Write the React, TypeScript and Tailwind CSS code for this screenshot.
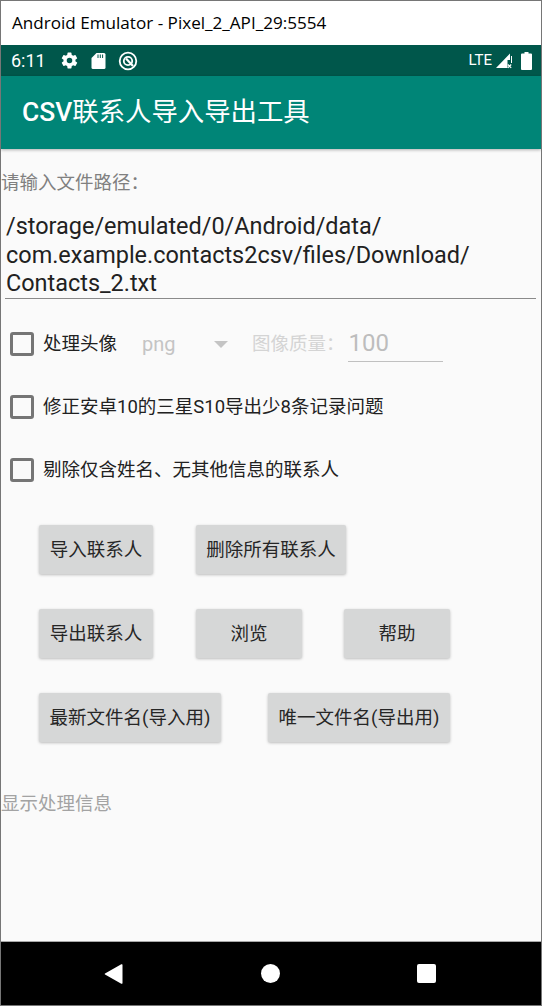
const cjk = "font-['Roboto','Noto_Sans_CJK_SC',sans-serif]";

function Box() {
  return <div className="w-[24px] h-[24px] rounded-[3px] border-[3px] border-[#757575] shrink-0" />;
}

function Btn({ w, label, ml }: { w: string; label: string; ml: string }) {
  return (
    <div className={`${w} ${ml} h-[49px] pt-[2px] flex items-center justify-center rounded-[2px] bg-[#d6d7d7] text-[18.5px] text-[#262626] shadow-[0_1px_3px_rgba(0,0,0,0.25)] whitespace-nowrap`}>
      {label}
    </div>
  );
}

export default function App() {
  return (
    <div className={`${cjk} w-[542px] h-[1006px] bg-white border border-[#767676] flex flex-col overflow-hidden`}>
      <div className="h-[44px] bg-white flex items-center pl-[11px] text-[17.1px] text-black font-['Open_Sans',sans-serif] shrink-0">
        Android Emulator - Pixel_2_API_29:5554
      </div>
      <div className="h-[31px] bg-[#00574b] flex items-center pl-[10px] pr-[9px] text-white shrink-0">
        <span className="text-[18px] w-[37px]">6:11</span>
        <svg className="ml-[12px]" width="19" height="19" viewBox="0 0 24 24" fill="#fff">
          <path d="M19.400 13c.04-.3.1-.65.1-1s-.06-.7-.1-1l2.100-1.650c.2-.15.25-.42.13-.64l-2-3.460c-.12-.22-.4-.3-.6-.22l-2.500 1c-.5-.4-1.100-.7-1.700-1l-.4-2.650A.5.5 0 0 0 14 2h-4a.5.5 0 0 0-.5.42L9.100 5.070c-.6.25-1.200.6-1.700 1l-2.500-1c-.2-.1-.5 0-.6.22l-2 3.460c-.12.22-.08.5.13.64L4.500 11c0 .3-.1.65-.1 1s.06.7.1 1l-2.100 1.650c-.2.15-.25.42-.13.64l2 3.460c.12.22.4.3.6.22l2.500-1c.5.4 1.100.7 1.700 1l.4 2.650c0 .24.25.42.5.42h4c.25 0 .46-.18.5-.42l.4-2.650c.6-.25 1.200-.6 1.700-1l2.500 1c.2.1.5 0 .6-.22l2-3.460c.12-.22.07-.5-.13-.64L19.400 13zM12 15.500a3.500 3.500 0 1 1 0-7 3.500 3.500 0 0 1 0 7z" />
        </svg>
        <svg className="ml-[12px]" width="15" height="18" viewBox="0 0 15 18" fill="#fff">
          <path d="M5.500 1H13a1.500 1.500 0 0 1 1.500 1.500v13A1.500 1.500 0 0 1 13 17H2a1.500 1.500 0 0 1-1.500-1.500V6z" />
          <path d="M7 2.500v3.500M9.300 2.500v3.500M11.600 2.500v3.500" stroke="#00574b" strokeWidth="1" />
        </svg>
        <svg className="ml-[12px]" width="20" height="20" viewBox="0 0 20 20" fill="none" stroke="#fff">
          <circle cx="10" cy="10" r="8.300" strokeWidth="1.800" />
          <circle cx="10" cy="10" r="4.200" strokeWidth="1.800" />
          <path d="M8 7.500 15 15" strokeWidth="2.200" />
        </svg>
        <span className="ml-auto text-[15px]">LTE</span>
        <svg className="ml-[3px]" width="18" height="18" viewBox="0 0 18 18" fill="#fff">
          <path d="M15 1.500v6.500h-2.500v8H1z" />
          <path d="M16.500 4v7" stroke="#fff" strokeWidth="1" />
          <path d="M12.800 12.500l3.400 3.400M16.200 12.500 12.800 15.900" stroke="#fff" strokeWidth="1.200" />
        </svg>
        <svg className="ml-[8px]" width="11" height="18" viewBox="0 0 11 18" fill="#fff">
          <path d="M3.500 0h4v1.500H10a1 1 0 0 1 1 1V17a1 1 0 0 1-1 1H1a1 1 0 0 1-1-1V2.500a1 1 0 0 1 1-1h2.500z" />
        </svg>
      </div>
      <div className="h-[73px] bg-[#008577] flex items-center pl-[21px] text-[26.4px] text-white shrink-0 shadow-[0_1px_3px_rgba(0,0,0,0.3)] z-10">
        <span className="font-medium">CSV</span>联系人导入导出工具
      </div>
      <div className="flex-1 bg-[#fafafa] flex flex-col min-h-0">
        <div className="text-[18.5px] leading-[24px] text-[#808080] mt-[22px]">请输入文件路径：</div>
        <div className="mx-[4px] mt-[17px] pl-[1px] text-[23.45px] leading-[28.5px] text-[#212121] border-b border-[#8a8a8a] h-[87px] w-[531px]">
          /storage/emulated/0/Android/data/<br />
          com.example.contacts2csv/files/Download/<br />
          Contacts_2.txt
        </div>
        <div className="flex items-center ml-[9px] mt-[30px] h-[30px] text-[18.5px]">
          <Box />
          <span className="ml-[9px] mt-[2px] text-[#212121] w-[99px]">处理头像</span>
          <span className="text-[20px] text-[#c4c4c4] w-[72px]">png</span>
          <svg width="14" height="7" viewBox="0 0 14 7" fill="#c4c4c4"><path d="M0 0h14L7 7z" /></svg>
          <span className="ml-[24px] mt-[2px] text-[#d4d4d4]">图像质量：</span>
          <span className="ml-[3px] w-[95px] h-[34px] text-[24px] leading-[30px] mt-[2px] text-[#bdbdbd] border-b border-[#c0c0c0] pl-[1px]">100</span>
        </div>
        <div className="flex items-center ml-[9px] mt-[33px] h-[30px] text-[18.5px] text-[#212121]">
          <Box />
          <span className="ml-[9px] mt-[2px]">修正安卓10的三星S10导出少8条记录问题</span>
        </div>
        <div className="flex items-center ml-[9px] mt-[33px] h-[30px] text-[18.5px] text-[#212121]">
          <Box />
          <span className="ml-[9px] mt-[2px]">剔除仅含姓名、无其他信息的联系人</span>
        </div>
        <div className="flex ml-[38px] mt-[40px]">
          <Btn w="w-[114px]" ml="" label="导入联系人" />
          <Btn w="w-[150px]" ml="ml-[43px]" label="删除所有联系人" />
        </div>
        <div className="flex ml-[38px] mt-[35px]">
          <Btn w="w-[114px]" ml="" label="导出联系人" />
          <Btn w="w-[106px]" ml="ml-[43px]" label="浏览" />
          <Btn w="w-[106px]" ml="ml-[42px]" label="帮助" />
        </div>
        <div className="flex ml-[38px] mt-[35px]">
          <Btn w="w-[182px]" ml="" label="最新文件名(导入用)" />
          <Btn w="w-[182px]" ml="ml-[47px]" label="唯一文件名(导出用)" />
        </div>
        <div className="text-[18.5px] leading-[24px] text-[#a3a3a3] mt-[50px]">显示处理信息</div>
      </div>
      <div className="h-[64px] bg-black shrink-0 border-t border-[#a8a8a8] flex items-center relative">
        <div className="flex items-center justify-between w-full pl-[103px] pr-[105px]">
          <svg width="19" height="22" viewBox="0 0 19 22" fill="#fff"><path d="M18 1.200a.8.8 0 0 1 .5.8v18a.8.8 0 0 1-1.200.7L1 11.500a.6.6 0 0 1 0-1L17.300 1.200z" /></svg>
          <div className="w-[19px] h-[19px] rounded-full bg-white" />
          <div className="w-[19px] h-[19px] rounded-[2px] bg-white" />
        </div>
      </div>
    </div>
  );
}
